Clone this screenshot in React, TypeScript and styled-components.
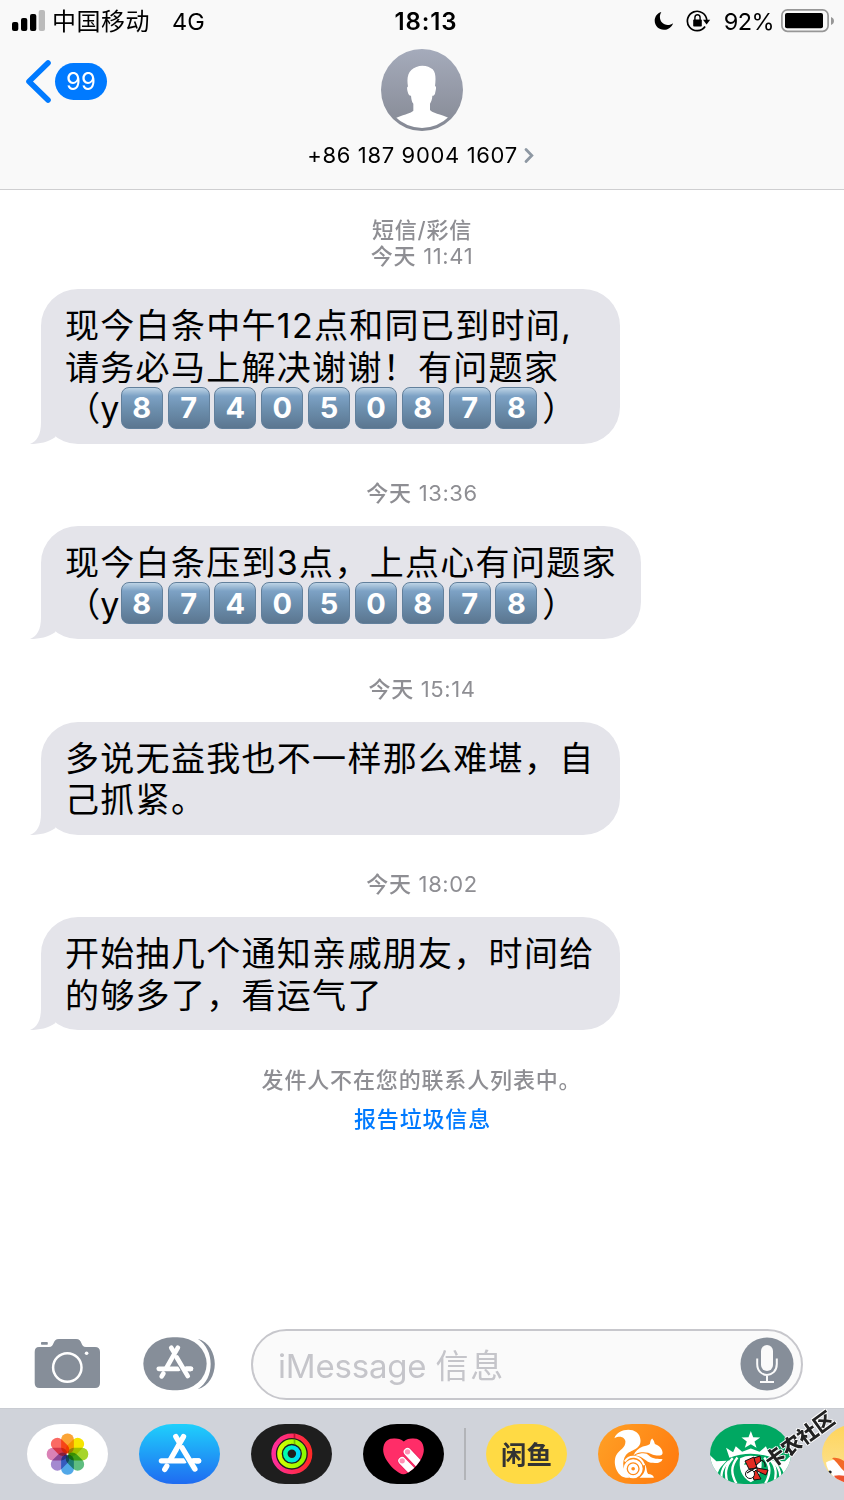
import { ReactNode } from 'react';
import styled, { createGlobalStyle } from 'styled-components';

const GlobalStyle = createGlobalStyle`
  * {
    box-sizing: border-box;
  }
  body {
    margin: 0;
    background: #fff;
    font-family: Inter, 'Noto Sans CJK SC', sans-serif;
  }
  svg {
    display: block;
    flex-shrink: 0;
  }
`;

const Screen = styled.div`
  display: flex;
  flex-direction: column;
  position: relative;
  width: 844px;
  height: 1500px;
  overflow: hidden;
  background: #fff;
  color: #000;
  white-space: nowrap;
`;

const Header = styled.header`
  height: 190px;
  background: #f9f9f9;
  border-bottom: 1.5px solid #cfcfd1;
`;

const StatusBar = styled.div`
  display: grid;
  grid-template-columns: 1fr auto 1fr;
  align-items: center;
  height: 42px;
  padding: 0 10px 0 12px;
  font-size: 23.5px;
`;

const StatusGroup = styled.div<{ $end?: boolean }>`
  display: flex;
  align-items: center;
  justify-content: ${(props) => (props.$end ? 'flex-end' : 'flex-start')};
`;

const Carrier = styled.span`
  margin: -3px 22px 0 7px;
  font-size: 24px;
  letter-spacing: 0.5px;
`;

const Clock = styled.span`
  padding-left: 6px;
  font-size: 24px;
  font-weight: 600;
  letter-spacing: 0.9px;
`;

const BatteryLevel = styled.span`
  margin: 0 7px 0 13px;
  letter-spacing: -0.6px;
`;

const NavRow = styled.div`
  display: grid;
  grid-template-columns: 1fr auto 1fr;
  align-items: start;
  padding-top: 7px;
`;

const BackButton = styled.div`
  display: flex;
  align-items: center;
  gap: 3px;
  padding: 10px 0 0 25px;
`;

const UnreadBadge = styled.span`
  display: flex;
  align-items: center;
  justify-content: center;
  width: 52px;
  height: 37px;
  border-radius: 19px;
  background: #007aff;
  color: #fff;
  font-size: 24px;
`;

const Contact = styled.div`
  display: flex;
  flex-direction: column;
  align-items: center;
`;

const PhoneNumber = styled.div`
  display: flex;
  align-items: center;
  gap: 6px;
  margin: 10px 3px 0 0;
  line-height: 28px;
  font-size: 22px;
  letter-spacing: 0.65px;
`;

const Thread = styled.main`
  flex: 1;
  display: flex;
  flex-direction: column;
  align-items: flex-start;
  padding-left: 41px;
`;

const Stamp = styled.div<{ $first?: boolean }>`
  align-self: center;
  display: flex;
  flex-direction: column;
  justify-content: center;
  align-items: center;
  height: ${(props) => (props.$first ? 99.25 : 82.5)}px;
  padding-top: ${(props) => (props.$first ? 7 : 16)}px;
  margin-left: -41px;
  color: #8e8e93;
  font-size: 22px;
  line-height: 26px;
  letter-spacing: 0.6px;
`;

const StampLabel = styled.span`
  font-weight: 500;
  letter-spacing: 0.8px;
`;

const Bubble = styled.div<{ $width: number }>`
  position: relative;
  width: ${(props) => props.$width}px;
  padding: 15.75px 0 14.25px 24px;
  border-radius: 37px;
  background: #e4e4ea;
  font-size: 34px;
  letter-spacing: 1.3px;
`;

const BubbleTail = styled.svg`
  position: absolute;
  left: -11px;
  bottom: 0;
`;

const Line = styled.div`
  display: flex;
  align-items: center;
  height: 41.5px;
  line-height: 41.5px;
`;

// full-width parens trimmed to their inked half
const Paren = styled.span<{ $open?: boolean }>`
  display: flex;
  justify-content: ${(props) => (props.$open ? 'flex-end' : 'flex-start')};
  width: 35.3px;
  font-feature-settings: 'halt';
  letter-spacing: 0;
`;

const Keycap = styled.span`
  display: flex;
  align-items: center;
  justify-content: center;
  width: 42px;
  height: 42px;
  margin: -2px 4.85px 0 0;
  border: 1px solid #62809c;
  border-radius: 8px;
  background: linear-gradient(#bdd3e5 0, #7da2c5 20%, #6d90af 50%, #5b7690 100%);
  color: #fff;
  font-size: 29px;
  font-weight: 700;
  letter-spacing: 0;
`;

const Notice = styled.div<{ $link?: boolean }>`
  align-self: center;
  margin-left: ${(props) => (props.$link ? -40 : -42)}px;
  margin-top: ${(props) => (props.$link ? 10 : 36)}px;
  line-height: 29px;
  font-size: 22px;
  font-weight: 500;
  letter-spacing: 0.85px;
  color: ${(props) => (props.$link ? '#007aff' : '#8e8e93')};
`;

const Composer = styled.div`
  display: flex;
  align-items: center;
  height: 89px;
  padding: 0 41px 0 34px;
`;

const MessageField = styled.div`
  flex: 1;
  display: flex;
  align-items: center;
  justify-content: space-between;
  height: 71px;
  margin: 1px 0 0 34px;
  padding: 0 7px 0 25px;
  border: 2px solid #c7c7cc;
  border-radius: 36px;
  background: #fafafa;
  color: #c5c5ca;
  font-size: 33px;
  letter-spacing: -0.2px;
`;

const Placeholder = styled.span`
  span {
    letter-spacing: 1.8px;
  }
`;

const AppStrip = styled.div`
  display: flex;
  height: 92px;
  padding: 15px 0 0 27px;
  border-top: 1px solid #c9ccd2;
  background: #d0d3da;
  overflow: hidden;
`;

const AppPill = styled.div<{ $bg: string }>`
  flex: 0 0 81px;
  height: 60px;
  margin-right: 31px;
  border-radius: 34px / 30px;
  background: ${(props) => props.$bg};
  overflow: hidden;
`;

const StripDivider = styled.div`
  flex: 0 0 2px;
  height: 52px;
  margin: 4px 20px 0 -11px;
  background: #b2b4b8;
`;

const FishLogo = styled.div`
  line-height: 58px;
  text-align: center;
  color: #333;
  font-size: 25.5px;
  font-weight: 700;
  font-family: 'Noto Sans CJK SC', sans-serif;
`;

const Watermark = styled.div`
  position: absolute;
  left: 749px;
  top: 1424px;
  width: 100px;
  line-height: 30px;
  text-align: center;
  transform: rotate(-36deg);
  font-family: 'Noto Sans CJK SC', sans-serif;
  font-size: 20px;
  font-weight: 900;
  color: #222;
  text-shadow: 1px 0 #fff, -1px 0 #fff, 0 1px #fff, 0 -1px #fff;
`;

const WatermarkLogo = styled.svg`
  position: absolute;
  left: 742px;
  top: 1453px;
`;

const SignalIcon = () => (
  <svg width='33' height='22' viewBox='0 0 33 22'>
    <rect x='0' y='12' width='6.3' height='9' rx='2' />
    <rect x='9' y='8' width='6.3' height='13' rx='2' />
    <rect x='18' y='4' width='6.3' height='17' rx='2' />
    <rect x='26.7' y='0' width='6.3' height='21' rx='2' fill='#bbb' />
  </svg>
);

const MoonIcon = () => (
  <svg width='20' height='20' viewBox='0 0 20 20'>
    <path d='M7.3 1C3.2 2.3.7 5.7.7 9.8c0 5.1 4.1 9 9.2 9 4.2 0 7.8-2.6 9.2-6.6-1.5 1.2-3.4 1.8-5.3 1.8-4.7 0-7.9-3.5-7.9-7.9 0-1.9.5-3.6 1.4-5.1z' />
  </svg>
);

const RotationLockIcon = () => (
  <svg width='25' height='24' viewBox='0 0 25 24' style={{ marginLeft: 12 }}>
    <path d='M19.1 17.5A9.7 9.7 0 1 1 20.8 11.5' fill='none' stroke='#000' strokeWidth='1.7' />
    <path d='M17 10.8h7.2L20.6 15.6z' />
    <rect x='7.2' y='10.6' width='8.6' height='7' rx='.8' />
    <path d='M8.9 11V8.7a2.6 2.9 0 0 1 5.2 0V11' fill='none' stroke='#000' strokeWidth='1.4' />
  </svg>
);

const BatteryIcon = () => (
  <svg width='53' height='24' viewBox='0 0 53 24'>
    <rect x='.9' y='.9' width='46.2' height='21.4' rx='5.5' fill='none' stroke='#979797' strokeWidth='1.7' />
    <rect x='4' y='4' width='38' height='15.3' rx='2' />
    <path d='M50 8v8c1.9-.7 3-2.2 3-4s-1.1-3.3-3-4z' fill='#979797' />
  </svg>
);

const BackIcon = () => (
  <svg width='27' height='44' viewBox='0 0 27 44'>
    <path d='M23 4L4 22.5L23 41' fill='none' stroke='#007aff' strokeWidth='5.6' strokeLinecap='round' strokeLinejoin='round' />
  </svg>
);

const Avatar = () => (
  <svg width='82' height='82' viewBox='0 0 246 246'>
    <defs>
      <linearGradient id='avatar' x2='0' y2='1'>
        <stop stopColor='#a5abbb' />
        <stop offset='1' stopColor='#858994' />
      </linearGradient>
      <clipPath id='avatarInner'>
        <circle cx='123' cy='123' r='114' />
      </clipPath>
    </defs>
    <circle cx='123' cy='123' r='123' fill='url(#avatar)' />
    <path
      clipPath='url(#avatarInner)'
      fill='#fff'
      d='M81 113C77 91 80 72 91 63C99 55 112 50 124 50C138 50 147 55 155 61C166 73 164 94 162 112C168 111 164 125 162 134C160 139 157 140 154 140C154 150 150 159 147 164L147 183C153 193 178 194 205 208L210 246H30L43 208C61 198 89 194 97 185L97 164C92 158 91 150 90 140C86 141 82 137 80 128C78 121 77 112 81 113z'
    />
  </svg>
);

const DetailIcon = () => (
  <svg width='10' height='17' viewBox='0 0 10 17'>
    <path d='M2 2.5L7.8 8.5L2 14.5' fill='none' stroke='#8e98a3' strokeWidth='2.8' strokeLinecap='round' />
  </svg>
);

const CameraIcon = () => (
  <svg width='67' height='52' viewBox='0 0 67 52'>
    <path fill='#868e99' d='M5 9H15C21 9 18 1 25 1H42C49 1 46 9 52 9H61Q66 9 66 14V45Q66 50 61 50H5.5Q.7 50 .7 45V14Q.7 9 5 9z' />
    <rect x='7' y='4' width='6.8' height='2.8' rx='.8' fill='#868e99' />
    <circle cx='33.3' cy='29.5' r='14.2' fill='none' stroke='#fff' strokeWidth='2.5' />
    <circle cx='52.6' cy='15.2' r='1.8' fill='#fff' />
  </svg>
);

// the crossed sticks of the store logo, drawn on the 242x181 pill grid
const StoreSticks = ({ gap }: { gap: string }) => (
  <g fill='none' stroke='#fff' strokeWidth='16' strokeLinecap='round'>
    <path d='M110 38L119 53' />
    <path d='M133 38L94 107' />
    <path d='M67 111H136' />
    <path d='M155 111H178' />
    <path d='M83 127L77 137' />
    <path d='M129 72L167 136' stroke={gap} strokeWidth='23' strokeLinecap='butt' />
    <path d='M129 72L167 136' />
    <path d='M160 111H178' />
  </g>
);

const StoreDrawerIcon = () => (
  <svg width='74' height='54' viewBox='0 0 222 162' style={{ marginLeft: 42 }}>
    <path fill='#868e99' d='M164 5C232 25 233 137 164 157C216 125 216 37 164 5z' />
    <rect x='1' y='1' width='190' height='159' rx='88' ry='79.5' fill='#868e99' />
    <g transform='translate(-11 -1) scale(.87)'>
      <StoreSticks gap='#868e99' />
    </g>
  </svg>
);

const MicIcon = () => (
  <svg width='54' height='54' viewBox='0 0 54 54' style={{ marginTop: -1 }}>
    <circle cx='27' cy='27' r='26.5' fill='#868e99' />
    <rect x='21' y='8' width='12' height='26' rx='6' fill='#fafafa' />
    <path d='M17.2 21.5V27C17.2 41.5 36.8 41.5 36.8 27V21.5M27 38V45M20 45H34' fill='none' stroke='#fafafa' strokeWidth='2' />
  </svg>
);

const PillArt = ({ children }: { children: ReactNode }) => (
  <svg width='81' height='60' viewBox='0 0 242 181' preserveAspectRatio='none'>
    {children}
  </svg>
);

const petals = ['#fba436', '#f6e500', '#a6d52a', '#5fbd80', '#52a8e8', '#a48ad0', '#da82b6', '#fa6a64'];

const PhotosArt = () => (
  <PillArt>
    <g style={{ isolation: 'isolate' }}>
      {petals.map((color, i) => (
        <rect
          key={color}
          x='102'
          y='29'
          width='38'
          height='61'
          rx='18'
          fill={color}
          transform={`rotate(${i * 45} 121 91)`}
          style={{ mixBlendMode: 'multiply' }}
        />
      ))}
    </g>
    <circle cx='121' cy='91' r='3' fill='#fff' opacity='.8' />
  </PillArt>
);

const RingsArt = () => (
  <PillArt>
    <defs>
      <linearGradient id='ringOuter'>
        <stop stopColor='#ff2d9a' />
        <stop offset='1' stopColor='#ff2a28' />
      </linearGradient>
      <linearGradient id='ringMiddle'>
        <stop stopColor='#d4ff00' />
        <stop offset='1' stopColor='#8dfa00' />
      </linearGradient>
      <linearGradient id='ringInner'>
        <stop stopColor='#00ffa8' />
        <stop offset='1' stopColor='#00d8fe' />
      </linearGradient>
    </defs>
    <g fill='none' strokeWidth='13.5'>
      <circle cx='122' cy='90' r='54.5' stroke='url(#ringOuter)' />
      <circle cx='122' cy='90' r='37' stroke='url(#ringMiddle)' />
      <circle cx='122' cy='90' r='19.5' stroke='url(#ringInner)' />
      <path d='M130 29V42' stroke='#a00d24' strokeWidth='5' opacity='.7' />
      <path d='M130 47V60' stroke='#569500' strokeWidth='5' opacity='.6' />
    </g>
  </PillArt>
);

const HeartArt = () => (
  <PillArt>
    <defs>
      <clipPath id='heart'>
        <path d='M122 53C101 37 62 38 60 77C60 111 104 152 121 152C138 152 182 111 182 77C180 38 141 37 122 53z' />
      </clipPath>
    </defs>
    <g clipPath='url(#heart)'>
      <rect width='242' height='181' fill='#ff2d68' />
      <g strokeLinecap='round'>
        <path d='M134 85L185 140M117 111L165 163' stroke='#c91a50' strokeWidth='28' opacity='.35' />
        <path d='M133 84L185 140' stroke='#fff' strokeWidth='23' />
        <path d='M117 111L165 161' stroke='#fff' strokeWidth='23' />
      </g>
      <ellipse cx='133' cy='84' rx='8' ry='8' fill='#ff92b5' />
      <ellipse cx='117' cy='111' rx='8' ry='8' fill='#ff92b5' />
    </g>
  </PillArt>
);

const SquirrelArt = () => (
  <PillArt>
    <g fill='#fff'>
      <path d='M49 43C58 11 125 5 127 49C128 78 98 77 84 93C68 115 76 146 94 162H83C57 158 43 120 54 95C65 76 82 74 82 53C81 42 68 33 49 43z' />
      <path d='M106 94C112 82 121 73 134 68C143 65 151 64 155 60C157 51 157 48 162 44Q168 51 170 60C183 64 194 77 193 88C191 99 171 95 164 93C151 84 134 84 125 86C116 88 111 91 106 94z' />
      <path d='M111 94C132 86 145 87 153 96C164 107 181 105 193 106C188 119 173 118 158 117C143 114 136 98 111 94z' />
      <path d='M139 121C147 130 144 145 150 151C158 151 166 155 167 162H124C138 151 144 138 139 121z' />
    </g>
    <g fill='none' stroke='#fff'>
      <path d='M80 113C93 93 125 92 138 124' strokeWidth='6' />
      <circle cx='105' cy='135' r='24' strokeWidth='9' />
      <circle cx='105' cy='135' r='10.5' strokeWidth='10' />
    </g>
  </PillArt>
);

const SirenArt = () => (
  <PillArt>
    <g fill='#fff'>
      <path d='M122 21L129 40L150 41L133 53L139 72L122 61L104 72L110 53L94 41L115 40z' />
      <path d='M48 72L69 85L77 67L96 84L122 74L148 84L167 67L175 85L198 72L187 102Q122 77 58 102z' />
      <path d='M0 94L19 112L50 111L36 126C23 139 21 155 18 181H0z' />
      <path d='M242 94L224 112L193 111L207 126C220 139 222 155 225 181H242z' />
      <path d='M90 103Q122 88 153 103C158 133 151 160 122 176C93 160 85 133 90 103z' />
    </g>
    <g fill='none' stroke='#fff' strokeWidth='7'>
      <path d='M82 101C62 127 62 149 79 180' />
      <path d='M68 103C45 127 44 150 53 181' />
      <path d='M57 112C33 133 32 153 35 181' />
      <path d='M162 101C182 127 182 149 165 180' />
      <path d='M176 103C199 127 200 150 191 181' />
      <path d='M187 112C211 133 212 153 209 181' />
    </g>
    <path d='M103 122Q111 115 116 122M129 122Q137 115 142 122M122 124V141M109 153Q122 160 134 153' fill='none' stroke='#00a862' strokeWidth='4' />
  </PillArt>
);

const GooseArt = () => (
  <PillArt>
    <path d='M12 116C31 104 55 105 80 120V181H45C45 161 15 147 12 116z' fill='#fff' />
    <path d='M30 103C46 99 63 107 90 130V157C55 142 54 121 30 103z' fill='#f36a28' />
    <path d='M36 156Q54 153 80 158V181H49z' fill='#ee542f' />
    <circle cx='24' cy='145' r='5' fill='#222' />
  </PillArt>
);

type Message = {
  day: string;
  time: string;
  width: number;
  lines: string[];
  code?: string;
};

const messages: Message[] = [
  {
    day: '今天',
    time: '11:41',
    width: 579,
    lines: ['现今白条中午12点和同已到时间,', '请务必马上解决谢谢！有问题家'],
    code: '874050878',
  },
  { day: '今天', time: '13:36', width: 600, lines: ['现今白条压到3点，上点心有问题家'], code: '874050878' },
  { day: '今天', time: '15:14', width: 579, lines: ['多说无益我也不一样那么难堪，自', '己抓紧。'] },
  { day: '今天', time: '18:02', width: 579, lines: ['开始抽几个通知亲戚朋友，时间给', '的够多了，看运气了'] },
];

export default function App() {
  return (
    <Screen>
      <GlobalStyle />
      <Header>
        <StatusBar>
          <StatusGroup>
            <SignalIcon />
            <Carrier>中国移动</Carrier>
            <span>4G</span>
          </StatusGroup>
          <Clock>18:13</Clock>
          <StatusGroup $end>
            <MoonIcon />
            <RotationLockIcon />
            <BatteryLevel>92%</BatteryLevel>
            <BatteryIcon />
          </StatusGroup>
        </StatusBar>
        <NavRow>
          <BackButton>
            <BackIcon />
            <UnreadBadge>99</UnreadBadge>
          </BackButton>
          <Contact>
            <Avatar />
            <PhoneNumber>
              +86 187 9004 1607
              <DetailIcon />
            </PhoneNumber>
          </Contact>
        </NavRow>
      </Header>
      <Thread>
        {messages.map((message, i) => (
          <div key={message.time} style={{ display: 'contents' }}>
            <Stamp $first={i === 0}>
              {i === 0 && <StampLabel>短信/彩信</StampLabel>}
              <span>
                <StampLabel>{message.day}</StampLabel> {message.time}
              </span>
            </Stamp>
            <Bubble $width={message.width}>
              {message.lines.map((line) => (
                <Line key={line}>{line}</Line>
              ))}
              {message.code && (
                <Line>
                  <Paren $open>（</Paren>y
                  {message.code.split('').map((digit, n) => (
                    <Keycap key={n}>{digit}</Keycap>
                  ))}
                  <Paren>）</Paren>
                </Line>
              )}
              <BubbleTail width='26' height='42' viewBox='0 0 26 42'>
                <path fill='#e4e4ea' d='M0 42C7 39 11 33 11 20V3L24 20L25.5 35C18 40 10 42 0 42z' />
              </BubbleTail>
            </Bubble>
          </div>
        ))}
        <Notice>发件人不在您的联系人列表中。</Notice>
        <Notice $link>报告垃圾信息</Notice>
      </Thread>
      <Composer>
        <CameraIcon />
        <StoreDrawerIcon />
        <MessageField>
          <Placeholder>
            iMessage <span>信息</span>
          </Placeholder>
          <MicIcon />
        </MessageField>
      </Composer>
      <AppStrip>
        <AppPill $bg='#fff'>
          <PhotosArt />
        </AppPill>
        <AppPill $bg='linear-gradient(#1fd0fc, #1f6bf1)'>
          <PillArt>
            <StoreSticks gap='#1f9df7' />
          </PillArt>
        </AppPill>
        <AppPill $bg='#1e1e1e'>
          <RingsArt />
        </AppPill>
        <AppPill $bg='#000'>
          <HeartArt />
        </AppPill>
        <StripDivider />
        <AppPill $bg='#ffda44'>
          <FishLogo>闲鱼</FishLogo>
        </AppPill>
        <AppPill $bg='linear-gradient(120deg, #ffa126, #ff780d)'>
          <SquirrelArt />
        </AppPill>
        <AppPill $bg='#00a862'>
          <SirenArt />
        </AppPill>
        <AppPill $bg='linear-gradient(#ffd45a, #fbe49a)'>
          <GooseArt />
        </AppPill>
      </AppStrip>
      <WatermarkLogo width='30' height='30' viewBox='0 0 30 30'>
        <g fill='#e32b22' stroke='#111' strokeWidth='1'>
          <path d='M3 8L12 4L15 15L7 16z' />
          <path d='M12 5L18 3L19 8L14 12z' />
          <path d='M15 15L26 17L24 22L15 18z' />
          <path d='M14 17L19 26L12 27L10 21z' />
        </g>
        <circle cx='8' cy='21' r='4.5' fill='#fff' stroke='#111' />
        <path d='M18 7Q24 8 23 14M5 20L15 14' fill='none' stroke='#111' strokeWidth='1.2' />
      </WatermarkLogo>
      <Watermark>卡农社区</Watermark>
    </Screen>
  );
}
